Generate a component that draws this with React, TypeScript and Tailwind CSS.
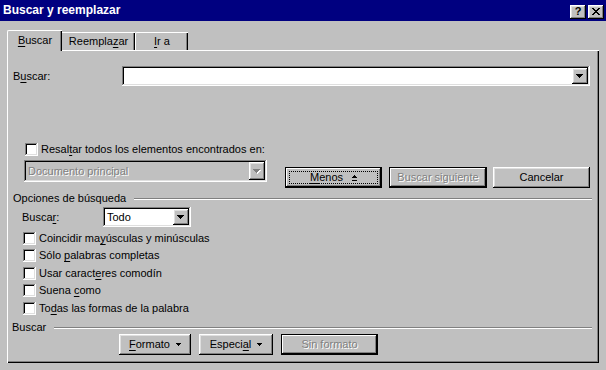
import React from 'react';

const RAISED = 'shadow-[inset_-1px_-1px_#000,inset_1px_1px_#fff,inset_-2px_-2px_#808080,inset_2px_2px_#dfdfdf]';
const SUNKEN = 'shadow-[inset_-1px_-1px_#fff,inset_1px_1px_#808080,inset_-2px_-2px_#dfdfdf,inset_2px_2px_#000]';
const DEFAULT_BTN = 'shadow-[inset_0_0_0_1px_#000,inset_-2px_-2px_#000,inset_2px_2px_#fff,inset_-3px_-3px_#808080]';
const DISABLED_TXT = 'text-[#808080] [text-shadow:1px_1px_0_#fff]';

const Mn: React.FC<{ children: React.ReactNode }> = ({ children }) => (
    <span className="underline underline-offset-[2px] decoration-1">{children}</span>
);

const Arrow: React.FC<{ disabled?: boolean }> = ({ disabled }) => (
    <svg width="8" height="5" viewBox="0 0 8 5" shapeRendering="crispEdges">
        {disabled && (
            <g fill="#fff">
                <rect x="1" y="1" width="7" height="1" />
                <rect x="2" y="2" width="5" height="1" />
                <rect x="3" y="3" width="3" height="1" />
                <rect x="4" y="4" width="1" height="1" />
            </g>
        )}
        <g fill={disabled ? '#808080' : '#000'}>
            <rect x="0" y="0" width="7" height="1" />
            <rect x="1" y="1" width="5" height="1" />
            <rect x="2" y="2" width="3" height="1" />
            <rect x="3" y="3" width="1" height="1" />
        </g>
    </svg>
);

const SmallArrow = () => (
    <svg width="5" height="3" viewBox="0 0 5 3" shapeRendering="crispEdges">
        <rect x="0" y="0" width="5" height="1" fill="#000" />
        <rect x="1" y="1" width="3" height="1" fill="#000" />
        <rect x="2" y="2" width="1" height="1" fill="#000" />
    </svg>
);

const LessIcon = () => (
    <svg width="5" height="6" viewBox="0 0 5 6" shapeRendering="crispEdges">
        <rect x="2" y="0" width="1" height="1" fill="#000" />
        <rect x="1" y="1" width="3" height="1" fill="#000" />
        <rect x="0" y="2" width="5" height="1" fill="#000" />
        <rect x="0" y="5" width="5" height="1" fill="#000" />
    </svg>
);

const DropBtn: React.FC<{ disabled?: boolean }> = ({ disabled }) => (
    <div className={`w-[16px] h-full bg-[#c0c0c0] ${RAISED} flex items-center justify-center`}>
        <Arrow disabled={disabled} />
    </div>
);

const Check: React.FC<{ children: React.ReactNode; className?: string }> = ({ children, className }) => (
    <div className={`flex items-center h-[13px] ${className || ''}`}>
        <div className={`w-[13px] h-[13px] bg-white ${SUNKEN} shrink-0`} />
        <span className="ml-[3px] leading-[13px]">{children}</span>
    </div>
);

const GroupLine: React.FC<{ label: string; className?: string }> = ({ label, className }) => (
    <div className={`flex items-center h-[13px] mr-[7px] ${className || ''}`}>
        <span className="leading-[13px] pr-[8px]">{label}</span>
        <div className="flex-1 border-t border-b border-t-[#808080] border-b-white" />
    </div>
);

const Button: React.FC<{ w: string; children: React.ReactNode; variant?: 'normal' | 'default' | 'disabled'; focus?: boolean }> = ({ w, children, variant = 'normal', focus }) => (
    <div className={`${w} h-[21px] bg-[#c0c0c0] flex items-center justify-center shrink-0 ${variant === 'normal' ? RAISED : DEFAULT_BTN} ${variant === 'disabled' ? DISABLED_TXT : ''}`}>
        {focus ? (
            <div className="w-[calc(100%-8px)] h-[13px] border border-dotted border-black flex items-center justify-center gap-[9px]">
                {children}
            </div>
        ) : (
            <div className="flex items-center justify-center gap-[6px]">{children}</div>
        )}
    </div>
);

export default function App() {
    return (
        <div className="w-[606px] h-[370px] bg-[#c0c0c0] text-black text-[11px] leading-[13px] font-['Liberation_Sans',Arial,sans-serif] overflow-hidden select-none">
            {/* title bar */}
            <div className="h-[21px] bg-[#000080] flex items-center pl-[3px] pr-[2px]">
                <span className="text-white font-bold text-[12px] flex-1">Buscar y reemplazar</span>
                <div className={`w-[16px] h-[14px] bg-[#c0c0c0] ${RAISED} flex items-center justify-center font-bold text-[11px] leading-[11px] mt-[2px]`}>?</div>
                <div className={`w-[16px] h-[14px] ml-[2px] bg-[#c0c0c0] ${RAISED} flex items-center justify-center mt-[2px]`}>
                    <svg width="8" height="7" viewBox="0 0 8 7" shapeRendering="crispEdges">
                        <path d="M0 0h2v1h-2zM6 0h2v1h-2zM1 1h2v1h-2zM5 1h2v1h-2zM2 2h4v1h-4zM3 3h2v1h-2zM2 4h4v1h-4zM1 5h2v1h-2zM5 5h2v1h-2zM0 6h2v1h-2zM6 6h2v1h-2z" fill="#000" />
                    </svg>
                </div>
            </div>

            {/* tabs */}
            <div className="flex items-end pl-[7px] pt-[9px]">
                <div className="relative z-10 w-[55px] h-[21px] -mb-[1px] bg-[#c0c0c0] border-l border-t border-white rounded-tl-[2px] shadow-[inset_-1px_0_#000,inset_-2px_0_#808080] flex items-center justify-center pb-[2px]">
                    <span><Mn>B</Mn>uscar</span>
                </div>
                <div className="w-[73px] h-[18px] bg-[#c0c0c0] border-t border-white shadow-[inset_-1px_0_#000,inset_-2px_0_#808080] flex items-center justify-center">
                    <span>Reempla<Mn>z</Mn>ar</span>
                </div>
                <div className="w-[53px] h-[18px] bg-[#c0c0c0] border-l border-t border-white rounded-tl-[2px] shadow-[inset_-1px_0_#000,inset_-2px_0_#808080] flex items-center justify-center">
                    <span><Mn>I</Mn>r a</span>
                </div>
            </div>

            {/* panel */}
            <div className="mx-[7px] h-[313px] border-l border-t border-white shadow-[inset_-1px_-1px_#000,inset_-2px_-2px_#808080] flex flex-col">
                <div className="flex items-center mt-[15px] ml-[5px]">
                    <span className="w-[109px]">B<Mn>u</Mn>scar:</span>
                    <div className={`w-[468px] h-[20px] bg-white ${SUNKEN} p-[2px] flex justify-end`}>
                        <DropBtn />
                    </div>
                </div>

                <Check className="mt-[57px] ml-[17px]">
                    Resal<Mn>t</Mn>ar todos los elementos encontrados en:
                </Check>

                <div className="flex items-start mt-[4px] ml-[16px]">
                    <div className={`w-[243px] h-[22px] bg-[#c0c0c0] ${SUNKEN} p-[2px] flex`}>
                        <span className={`flex-1 pl-[2px] self-center ${DISABLED_TXT}`}>Documento principal</span>
                        <DropBtn disabled />
                    </div>
                    <div className="flex mt-[7px] ml-[18px] gap-[7px]">
                        <Button w="w-[97px]" variant="default" focus>
                            <span><Mn>M</Mn>enos</span>
                            <LessIcon />
                        </Button>
                        <Button w="w-[98px]" variant="disabled">Buscar siguiente</Button>
                        <div className="ml-[-1px]">
                            <Button w="w-[97px]">Cancelar</Button>
                        </div>
                    </div>
                </div>

                <GroupLine label="Opciones de búsqueda" className="mt-[4px] ml-[5px]" />

                <div className="flex items-center mt-[2px] ml-[14px]">
                    <span className="w-[81px]">Busca<Mn>r</Mn>:</span>
                    <div className={`w-[88px] h-[20px] bg-white ${SUNKEN} p-[2px] flex`}>
                        <span className="flex-1 pl-[2px] self-center">Todo</span>
                        <DropBtn />
                    </div>
                </div>

                <Check className="mt-[5px] ml-[15px]">Coincidir ma<Mn>y</Mn>úsculas y minúsculas</Check>
                <Check className="mt-[4px] ml-[15px]">Sólo <Mn>p</Mn>alabras completas</Check>
                <Check className="mt-[5px] ml-[15px]">Usar caract<Mn>e</Mn>res comodín</Check>
                <Check className="mt-[4px] ml-[15px]">Suena <Mn>c</Mn>omo</Check>
                <Check className="mt-[5px] ml-[15px]">To<Mn>d</Mn>as las formas de la palabra</Check>

                <GroupLine label="Buscar" className="mt-[6px] ml-[4px]" />

                <div className="flex mt-[0px] ml-[111px]">
                    <Button w="w-[72px]">
                        <span><Mn>F</Mn>ormato</span>
                        <SmallArrow />
                    </Button>
                    <div className="ml-[8px]">
                        <Button w="w-[74px]">
                            <span>Especi<Mn>a</Mn>l</span>
                            <SmallArrow />
                        </Button>
                    </div>
                    <div className="ml-[8px]">
                        <Button w="w-[97px]" variant="disabled">Sin formato</Button>
                    </div>
                </div>
            </div>
        </div>
    );
}
